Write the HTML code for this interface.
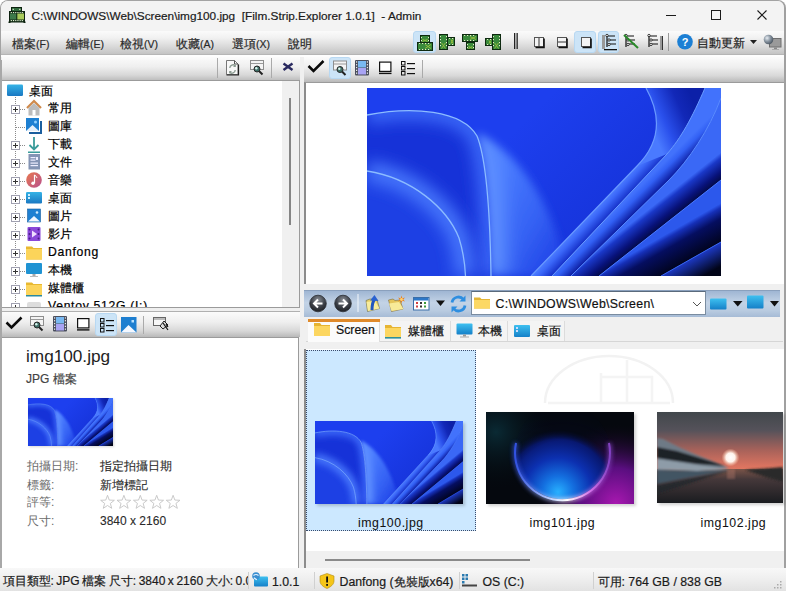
<!DOCTYPE html><html><head><meta charset="utf-8"><style>
*{margin:0;padding:0;box-sizing:border-box}
html,body{width:786px;height:591px;overflow:hidden;background:#fff}
body{font-family:"Liberation Sans",sans-serif;font-size:12px;color:#000;position:relative}
.a{position:absolute}
svg{position:absolute;overflow:visible}
.t{position:absolute;white-space:pre;line-height:1;-webkit-text-stroke:.2px currentColor}
.tb{background:linear-gradient(#fbfbfb,#efefef 40%,#d8d8d8 75%,#b9b9b9)}
.hl{position:absolute;background:#cce4f7;border:1px solid #b8d8f2;border-radius:3px}
.sep{position:absolute;width:1px;background:#a8a8a8;box-shadow:1px 0 0 #fcfcfc}
</style></head><body>
<svg width="0" height="0" style="position:absolute">
<symbol id="bloom" viewBox="0 0 354 188" preserveAspectRatio="none">
<defs>
 <filter id="bl8" x="-50%" y="-50%" width="200%" height="200%"><feGaussianBlur stdDeviation="8"/></filter>
 <filter id="bl3" x="-20%" y="-20%" width="140%" height="140%"><feGaussianBlur stdDeviation="4"/></filter>
 <clipPath id="cpP1"><path d="M0 27 C45 18 95 22 110 48 C119 70 123 120 124 188 H0 Z"/></clipPath>
 <clipPath id="cpP3"><path d="M110 45 C150 62 190 120 200 188 H123 C122 120 118 75 110 45 Z"/></clipPath>
 <linearGradient id="gAB" gradientUnits="userSpaceOnUse" x1="221.8" y1="128" x2="232.3" y2="138"><stop offset="0" stop-color="#4c7cff"/><stop offset="0.35" stop-color="#3a66f8"/><stop offset="1" stop-color="#1530c8"/></linearGradient>
 <linearGradient id="gABt" gradientUnits="userSpaceOnUse" x1="280" y1="30" x2="325" y2="10"><stop offset="0" stop-color="#4a7aff"/><stop offset="0.3" stop-color="#2a50ec"/><stop offset="0.7" stop-color="#1228b8"/><stop offset="1" stop-color="#0c20a8"/></linearGradient>
 <linearGradient id="gBC" gradientUnits="userSpaceOnUse" x1="220.8" y1="150" x2="231.7" y2="161"><stop offset="0" stop-color="#4272fc"/><stop offset="0.35" stop-color="#3260f4"/><stop offset="1" stop-color="#0c1ca0"/></linearGradient>
 <linearGradient id="gCC" gradientUnits="userSpaceOnUse" x1="232.6" y1="160" x2="246" y2="177"><stop offset="0" stop-color="#3a68f6"/><stop offset="0.2" stop-color="#1a38c8"/><stop offset="0.7" stop-color="#08127a"/><stop offset="1" stop-color="#030a48"/></linearGradient>
 <linearGradient id="gDE" gradientUnits="userSpaceOnUse" x1="248.5" y1="175" x2="265" y2="204"><stop offset="0" stop-color="#2c58ec"/><stop offset="0.12" stop-color="#1630b8"/><stop offset="0.4" stop-color="#050e60"/><stop offset="1" stop-color="#010420"/></linearGradient>
 <linearGradient id="gEE" gradientUnits="userSpaceOnUse" x1="330" y1="168" x2="340" y2="186"><stop offset="0" stop-color="#1c38c0"/><stop offset="1" stop-color="#010418"/></linearGradient>
 <linearGradient id="gTop" gradientUnits="userSpaceOnUse" x1="0" y1="0" x2="0" y2="60"><stop offset="0" stop-color="#1c40f2"/><stop offset="1" stop-color="#1838e8"/></linearGradient>
 <linearGradient id="gP3" gradientUnits="userSpaceOnUse" x1="120" y1="100" x2="200" y2="150"><stop offset="0" stop-color="#4a7cff"/><stop offset="0.6" stop-color="#3562f4"/><stop offset="1" stop-color="#2246e8"/></linearGradient>
 <linearGradient id="gMid" gradientUnits="userSpaceOnUse" x1="150" y1="40" x2="260" y2="150"><stop offset="0" stop-color="#1d3fee"/><stop offset="1" stop-color="#1532d8"/></linearGradient>
</defs>
<rect width="354" height="188" fill="url(#gMid)"/>
<g filter="url(#bl3)"><g clip-path="url(#cpP3)">
 <rect width="354" height="188" fill="url(#gP3)"/>
 <path d="M0 27 C45 18 95 22 110 48 C119 70 123 120 124 188" stroke="#5f90ff" stroke-width="30" fill="none" filter="url(#bl8)"/>
</g></g>
<g clip-path="url(#cpP1)">
 <rect width="354" height="188" fill="#1632d8"/>
 <path d="M0 27 C45 18 95 22 110 48 C119 70 123 120 124 188" stroke="#3c6afa" stroke-width="18" fill="none" filter="url(#bl8)"/>
 <path d="M0 83 C45 90 80 120 92 150 C96 163 98 176 98.5 188 H0 Z" fill="#1d40e4"/>
 <path d="M0 83 C45 90 80 120 92 150 C96 163 98 176 98.5 188" stroke="#4676fc" stroke-width="20" fill="none" filter="url(#bl8)"/>
</g>
<path d="M0 27 C45 18 95 22 110 48 C119 70 123 120 124 188" stroke="#8cbcff" stroke-width="1.3" fill="none"/>
<path d="M0 83 C45 90 80 120 92 150 C96 163 98 176 98.5 188" stroke="#8cbcff" stroke-width="1.3" fill="none"/>
<path d="M279 0 C293 25 296 52 270 78 L164 188 L185 188 L300 66 C314 50 325 30 338 0 Z" fill="url(#gAB)"/>
<path d="M279 0 C293 25 296 52 270 78 L300 66 C314 50 325 30 338 0 Z" fill="url(#gABt)"/>
<path d="M338 0 C325 30 314 50 300 66 L185 188 L204 188 L302 92 C322 72 342 42 354 10 V0 Z" fill="url(#gBC)"/>
<path d="M354 10 C342 42 322 72 302 92 L204 188 L232 188 L354 92 Z" fill="url(#gCC)"/>
<path d="M354 92 L232 188 L294 188 L354 154 Z" fill="url(#gDE)"/>
<path d="M354 154 L294 188 L354 188 Z" fill="url(#gEE)"/>
<path d="M279 0 C293 25 296 52 270 78 L164 188" stroke="#6a9aff" stroke-width="1.2" fill="none"/>
<path d="M338 0 C325 30 314 50 300 66 L185 188" stroke="#6a9cff" stroke-width="1" fill="none"/>
<path d="M354 10 C342 42 322 72 302 92 L204 188" stroke="#5a8cff" stroke-width="1" fill="none"/>
<path d="M354 92 L232 188" stroke="#4a7aff" stroke-width="1" fill="none"/>
<path d="M354 154 L294 188" stroke="#3a68f0" stroke-width="1" fill="none"/>
</symbol>
</svg>
<div class="a" style="left:0px;top:0px;width:786px;height:591px;background:#fff"></div>
<div class="a" style="left:0px;top:0px;width:786px;height:591px;background:#f0f0f0;border:1px solid #a3a3a3;border-right:2px solid #a0a0a0;border-bottom:none;border-radius:8px 8px 0 0"></div>
<div class="a" style="left:0px;top:60px;width:2px;height:510px;background:#a8a8a8"></div>
<div class="a" style="left:1px;top:1px;width:783px;height:30px;background:#f3f3f3;border-radius:7px 7px 0 0"></div>
<svg style="left:9px;top:7px" width="16" height="16" viewBox="0 0 16 16">
 <rect x="2" y="0" width="11" height="5" fill="#0d220f"/>
 <rect x="3" y="1" width="9" height="3" fill="#2f6a3c"/>
 <rect x="0" y="4" width="16" height="11.5" fill="#0d220f"/>
 <rect x="1" y="6.3" width="6.3" height="6.4" fill="#3d7a4a"/>
 <rect x="8.3" y="6.3" width="6.7" height="6.4" fill="#a9cb5a"/>
 <rect x="1" y="4.8" width="14" height="1.5" fill="#1c3a20"/><rect x="1" y="12.7" width="14" height="1.8" fill="#1c3a20"/>
 <g fill="#e6f2d4"><rect x="3.6" y="1.8" width="1.2" height="1.2"/><rect x="10.2" y="1.8" width="1.2" height="1.2"/>
 <rect x="1.8" y="5" width="1.1" height="1.1"/><rect x="4" y="5" width="1.1" height="1.1"/><rect x="6.2" y="5" width="1.1" height="1.1"/><rect x="8.4" y="5" width="1.1" height="1.1"/><rect x="10.6" y="5" width="1.1" height="1.1"/><rect x="12.8" y="5" width="1.1" height="1.1"/>
 <rect x="1.8" y="13" width="1.1" height="1.1"/><rect x="4" y="13" width="1.1" height="1.1"/><rect x="6.2" y="13" width="1.1" height="1.1"/><rect x="8.4" y="13" width="1.1" height="1.1"/><rect x="10.6" y="13" width="1.1" height="1.1"/><rect x="12.8" y="13" width="1.1" height="1.1"/></g>
 <rect x="-.5" y="14.5" width="2" height="1.5" fill="#0d220f"/><rect x="14.5" y="14.5" width="2" height="1.5" fill="#0d220f"/></svg>
<div class="t" style="left:31.5px;top:11px;font-size:11.8px;color:#1a1a1a">C:\WINDOWS\Web\Screen\img100.jpg  [Film.Strip.Explorer 1.0.1]  - Admin</div>
<div class="a" style="left:666px;top:15px;width:10px;height:1px;background:#1a1a1a"></div>
<div class="a" style="left:711px;top:10px;width:10px;height:10px;border:1px solid #1a1a1a"></div>
<svg style="left:757px;top:10px" width="10" height="10" viewBox="0 0 10 10"><path d="M0.5 0.5L9.5 9.5M9.5 0.5L0.5 9.5" stroke="#1a1a1a" stroke-width="1.1"/></svg>
<div class="a" style="left:1px;top:31px;width:783px;height:23px;background:linear-gradient(#fbfbfb,#f1f1f1 30%,#dbdbdb 65%,#c3c3c3)"></div>
<div class="a" style="left:1px;top:54px;width:783px;height:1px;background:#b5b5b5"></div>
<div class="a" style="left:1px;top:55px;width:783px;height:2px;background:#fdfdfd"></div>
<div class="t" style="left:12px;top:37.5px;color:#2a2a2a"><span style="font-size:12px">檔案</span><span style="font-size:10.5px">(F)</span></div>
<div class="t" style="left:66px;top:37.5px;color:#2a2a2a"><span style="font-size:12px">編輯</span><span style="font-size:10.5px">(E)</span></div>
<div class="t" style="left:120px;top:37.5px;color:#2a2a2a"><span style="font-size:12px">檢視</span><span style="font-size:10.5px">(V)</span></div>
<div class="t" style="left:176px;top:37.5px;color:#2a2a2a"><span style="font-size:12px">收藏</span><span style="font-size:10.5px">(A)</span></div>
<div class="t" style="left:232px;top:37.5px;color:#2a2a2a"><span style="font-size:12px">選項</span><span style="font-size:10.5px">(X)</span></div>
<div class="t" style="left:288px;top:37.5px;color:#2a2a2a"><span style="font-size:12px">說明</span></div>
<div class="hl" style="left:413px;top:31px;width:23px;height:22px"></div>
<div class="hl" style="left:574px;top:31px;width:22px;height:22px"></div>
<div class="hl" style="left:598px;top:31px;width:21px;height:22px"></div>
<svg style="left:0;top:0" width="786" height="591"><rect x="420.5" y="35.5" width="9" height="7" fill="#2e7434" stroke="#0e2a10" stroke-width="1"/><rect x="422" y="36" width="6" height="6" fill="#3a8a3c"/><path d="M422.5 39.4L427.5 41.5M427.5 39.4L422.5 41.5" stroke="#a8c840" stroke-width="1" opacity=".8"/><rect x="421" y="37" width="1" height="1.2" fill="#e8f0c8"/><rect x="428" y="37" width="1" height="1.2" fill="#e8f0c8"/><rect x="421" y="40" width="1" height="1.2" fill="#e8f0c8"/><rect x="428" y="40" width="1" height="1.2" fill="#e8f0c8"/><rect x="417.5" y="42.5" width="15" height="8" fill="#2e7434" stroke="#0e2a10" stroke-width="1"/><rect x="418" y="44" width="14" height="5" fill="#3a8a3c"/><path d="M425.0 44.5L431 48.5M431 44.5L425.0 48.5" stroke="#a8c840" stroke-width="1" opacity=".8"/><rect x="419" y="43" width="1.2" height="1" fill="#e8f0c8"/><rect x="419" y="49" width="1.2" height="1" fill="#e8f0c8"/><rect x="422" y="43" width="1.2" height="1" fill="#e8f0c8"/><rect x="422" y="49" width="1.2" height="1" fill="#e8f0c8"/><rect x="425" y="43" width="1.2" height="1" fill="#e8f0c8"/><rect x="425" y="49" width="1.2" height="1" fill="#e8f0c8"/><rect x="428" y="43" width="1.2" height="1" fill="#e8f0c8"/><rect x="428" y="49" width="1.2" height="1" fill="#e8f0c8"/><rect x="439.5" y="34.5" width="8" height="15" fill="#2e7434" stroke="#0e2a10" stroke-width="1"/><rect x="441" y="35" width="5" height="14" fill="#3a8a3c"/><path d="M441.5 42.8L445.5 48.5M445.5 42.8L441.5 48.5" stroke="#a8c840" stroke-width="1" opacity=".8"/><rect x="440" y="36" width="1" height="1.2" fill="#e8f0c8"/><rect x="446" y="36" width="1" height="1.2" fill="#e8f0c8"/><rect x="440" y="39" width="1" height="1.2" fill="#e8f0c8"/><rect x="446" y="39" width="1" height="1.2" fill="#e8f0c8"/><rect x="440" y="42" width="1" height="1.2" fill="#e8f0c8"/><rect x="446" y="42" width="1" height="1.2" fill="#e8f0c8"/><rect x="440" y="45" width="1" height="1.2" fill="#e8f0c8"/><rect x="446" y="45" width="1" height="1.2" fill="#e8f0c8"/><rect x="447.5" y="37.5" width="7" height="8" fill="#2e7434" stroke="#0e2a10" stroke-width="1"/><rect x="448" y="39" width="6" height="5" fill="#3a8a3c"/><path d="M451.0 39.5L453 43.5M453 39.5L451.0 43.5" stroke="#a8c840" stroke-width="1" opacity=".8"/><rect x="449" y="38" width="1.2" height="1" fill="#e8f0c8"/><rect x="449" y="44" width="1.2" height="1" fill="#e8f0c8"/><rect x="452" y="38" width="1.2" height="1" fill="#e8f0c8"/><rect x="452" y="44" width="1.2" height="1" fill="#e8f0c8"/><rect x="462.5" y="34.5" width="15" height="7" fill="#2e7434" stroke="#0e2a10" stroke-width="1"/><rect x="463" y="36" width="14" height="4" fill="#3a8a3c"/><path d="M470.0 36.5L476 39.5M476 36.5L470.0 39.5" stroke="#a8c840" stroke-width="1" opacity=".8"/><rect x="464" y="35" width="1.2" height="1" fill="#e8f0c8"/><rect x="464" y="40" width="1.2" height="1" fill="#e8f0c8"/><rect x="467" y="35" width="1.2" height="1" fill="#e8f0c8"/><rect x="467" y="40" width="1.2" height="1" fill="#e8f0c8"/><rect x="470" y="35" width="1.2" height="1" fill="#e8f0c8"/><rect x="470" y="40" width="1.2" height="1" fill="#e8f0c8"/><rect x="473" y="35" width="1.2" height="1" fill="#e8f0c8"/><rect x="473" y="40" width="1.2" height="1" fill="#e8f0c8"/><rect x="466.5" y="42.5" width="8" height="7" fill="#2e7434" stroke="#0e2a10" stroke-width="1"/><rect x="468" y="43" width="5" height="6" fill="#3a8a3c"/><path d="M468.5 46.4L472.5 48.5M472.5 46.4L468.5 48.5" stroke="#a8c840" stroke-width="1" opacity=".8"/><rect x="467" y="44" width="1" height="1.2" fill="#e8f0c8"/><rect x="473" y="44" width="1" height="1.2" fill="#e8f0c8"/><rect x="467" y="47" width="1" height="1.2" fill="#e8f0c8"/><rect x="473" y="47" width="1" height="1.2" fill="#e8f0c8"/><rect x="485.5" y="38.5" width="7" height="7" fill="#2e7434" stroke="#0e2a10" stroke-width="1"/><rect x="486" y="40" width="6" height="4" fill="#3a8a3c"/><path d="M489.0 40.5L491 43.5M491 40.5L489.0 43.5" stroke="#a8c840" stroke-width="1" opacity=".8"/><rect x="487" y="39" width="1.2" height="1" fill="#e8f0c8"/><rect x="487" y="44" width="1.2" height="1" fill="#e8f0c8"/><rect x="490" y="39" width="1.2" height="1" fill="#e8f0c8"/><rect x="490" y="44" width="1.2" height="1" fill="#e8f0c8"/><rect x="492.5" y="34.5" width="8" height="15" fill="#2e7434" stroke="#0e2a10" stroke-width="1"/><rect x="494" y="35" width="5" height="14" fill="#3a8a3c"/><path d="M494.5 42.8L498.5 48.5M498.5 42.8L494.5 48.5" stroke="#a8c840" stroke-width="1" opacity=".8"/><rect x="493" y="36" width="1" height="1.2" fill="#e8f0c8"/><rect x="499" y="36" width="1" height="1.2" fill="#e8f0c8"/><rect x="493" y="39" width="1" height="1.2" fill="#e8f0c8"/><rect x="499" y="39" width="1" height="1.2" fill="#e8f0c8"/><rect x="493" y="42" width="1" height="1.2" fill="#e8f0c8"/><rect x="499" y="42" width="1" height="1.2" fill="#e8f0c8"/><rect x="493" y="45" width="1" height="1.2" fill="#e8f0c8"/><rect x="499" y="45" width="1" height="1.2" fill="#e8f0c8"/><rect x="514" y="33" width="1.3" height="16" fill="#222"/><rect x="516.5" y="33" width="1.3" height="16" fill="#222"/><rect x="534.5" y="37.5" width="9" height="9" fill="#f4f4f4" stroke="#555" stroke-width="1"/><path d="M544 38.5V47.5H535.5" fill="none" stroke="#111" stroke-width="1.6"/><line x1="539" y1="38" x2="539" y2="47" stroke="#333"/><rect x="557.5" y="37.5" width="9" height="9" fill="#f4f4f4" stroke="#555" stroke-width="1"/><path d="M567 38.5V47.5H558.5" fill="none" stroke="#111" stroke-width="1.6"/><line x1="558" y1="42" x2="567" y2="42" stroke="#333"/><rect x="581.5" y="37.5" width="9" height="9" fill="#f4f4f4" stroke="#555" stroke-width="1"/><path d="M591 38.5V47.5H582.5" fill="none" stroke="#111" stroke-width="1.6"/><rect x="602" y="35" width="3" height="14" fill="#999"/><rect x="604" y="49" width="13" height="1.3" fill="#111"/><g stroke="#111" stroke-width="1.2" fill="none"><path d="M607 35V47"/><path d="M607 36H615M610 40H616M610 44H616"/></g><g fill="#fff" stroke="#111" stroke-width=".8"><circle cx="607" cy="35.5" r="1.2"/><circle cx="609" cy="40" r="1.2"/><circle cx="609" cy="44.5" r="1.2"/></g><g stroke="#111" stroke-width="1.2" fill="none"><path d="M626 35V47"/><path d="M626 36H634M629 40H635M629 44H635"/></g><g fill="#fff" stroke="#111" stroke-width=".8"><circle cx="626" cy="35.5" r="1.2"/><circle cx="628" cy="40" r="1.2"/><circle cx="628" cy="44.5" r="1.2"/></g><line x1="624" y1="35" x2="638" y2="48" stroke="#2a8a2a" stroke-width="2"/><rect x="660" y="36" width="3" height="14" fill="#999"/><rect x="662" y="36" width="1" height="14" fill="#333"/><g stroke="#111" stroke-width="1.2" fill="none"><path d="M649 35V47"/><path d="M649 36H657M652 40H658M652 44H658"/></g><g fill="#fff" stroke="#111" stroke-width=".8"><circle cx="649" cy="35.5" r="1.2"/><circle cx="651" cy="40" r="1.2"/><circle cx="651" cy="44.5" r="1.2"/></g><rect x="668" y="33" width="1" height="18" fill="#999"/><circle cx="685" cy="41.8" r="7.8" fill="#1c7fd4"/><text x="685" y="46" font-size="11" font-weight="bold" fill="#fff" text-anchor="middle" font-family="Liberation Sans">?</text><path d="M750 40h7l-3.5 4z" fill="#222"/><defs><radialGradient id="glb" cx=".35" cy=".35" r=".7"><stop offset="0" stop-color="#e8eef4"/><stop offset=".5" stop-color="#8a96a2"/><stop offset="1" stop-color="#4a5560"/></radialGradient></defs><rect x="769" y="38" width="12.5" height="9.5" fill="#6e6e6e"/><rect x="770" y="39" width="10.5" height="7.5" fill="#9a9a9a"/><rect x="774" y="47.5" width="3" height="1.5" fill="#888"/><rect x="772" y="49" width="7" height="1" fill="#aaa"/><circle cx="768.5" cy="39.5" r="4.8" fill="url(#glb)"/></svg>
<div class="t" style="left:697px;top:36.5px;font-size:12px;color:#222">自動更新</div>
<div class="a" style="left:2px;top:57px;width:298px;height:24px;background:linear-gradient(#fbfbfb,#efefef 40%,#d8d8d8 75%,#b9b9b9)"></div>
<div class="a" style="left:2px;top:80px;width:298px;height:228px;background:#fff;border:1px solid #9b9b9b;border-left:none"></div>
<div class="a" style="left:2px;top:308px;width:298px;height:4px;background:#efefef;border-bottom:1px solid #b0b0b0"></div>
<div class="a" style="left:2px;top:312px;width:298px;height:25px;background:linear-gradient(#fbfbfb,#efefef 40%,#d8d8d8 75%,#b9b9b9)"></div>
<div class="a" style="left:2px;top:337px;width:297px;height:231px;background:#fff;border-right:1px solid #9b9b9b;border-top:1px solid #9b9b9b"></div>
<div class="a" style="left:304px;top:57px;width:480px;height:25px;background:linear-gradient(#fbfbfb,#efefef 40%,#d8d8d8 75%,#b9b9b9)"></div>
<div class="a" style="left:304px;top:82px;width:480px;height:202px;background:#fff;border-left:2px solid #8c8c8c;border-top:1px solid #9b9b9b"></div>
<div class="a" style="left:304px;top:284px;width:480px;height:6px;background:#f0f0f0"></div>
<div class="a" style="left:304px;top:290px;width:476px;height:27px;background:linear-gradient(#9fb6d3,#c3d3e6 45%,#b9cbe0 75%,#a6bbd6);border-top:1px solid #8aa0bd"></div>
<div class="a" style="left:304px;top:317px;width:479px;height:32px;background:#f0f0f0"></div>
<div class="a" style="left:304px;top:349px;width:480px;height:202px;background:#fff;border-left:2px solid #8c8c8c"></div>
<div class="a" style="left:304px;top:551px;width:480px;height:17px;background:#f0f0f0;border-left:2px solid #8c8c8c"></div>
<div class="a" style="left:325px;top:559px;width:205px;height:2px;background:#8a8a8a"></div>
<div class="a" style="left:0px;top:568px;width:786px;height:23px;background:linear-gradient(#f8f8f8,#eeeeee 50%,#e2e2e2)"></div>
<svg style="left:0;top:0" width="786" height="591"><rect x="217" y="58" width="1" height="20" fill="#aaa"/><rect x="271" y="58" width="1" height="20" fill="#aaa"/><path d="M226.5 60.5h8l3.5 3.5v10.5h-11.5z" fill="#f8f8f8" stroke="#777" stroke-width="1"/><path d="M234.5 60.5v3.5h3.5" fill="none" stroke="#555"/><path d="M226.5 75h12V64.5" fill="none" stroke="#222" stroke-width="1.2"/><path d="M229.8 68a3.2 3.2 0 0 1 5.5 -2.2M235.2 70a3.2 3.2 0 0 1 -5.5 2.2" fill="none" stroke="#8a9a90" stroke-width="1.3"/><path d="M235.8 64.2v2.8h-2.8zM229.2 73.8v-2.8h2.8z" fill="#8a9a90"/><rect x="250.5" y="60.5" width="13" height="9" fill="#f4f4f4" stroke="#8e8e8e"/><rect x="251" y="63" width="12" height="1" fill="#9a9a9a"/><line x1="258.5" y1="70.5" x2="262.5" y2="74.5" stroke="#222" stroke-width="2"/><circle cx="257" cy="69" r="3" fill="#3e6e66" stroke="#2a2a2a" stroke-width="1"/><circle cx="256.3" cy="68.2" r="1.2" fill="#d8f4ee"/><path d="M283.5 63.5l9 6.5M292.5 63.5l-9 6.5" stroke="#2a2a60" stroke-width="2.4"/></svg>
<div class="a" style="left:3px;top:81px;width:296px;height:226px;overflow:hidden">
<svg style="left:0;top:-1px" width="279" height="227"><defs><linearGradient id="dg44" x1="0" y1="0" x2="0" y2="1"><stop offset="0" stop-color="#35b3e6"/><stop offset="1" stop-color="#1a78c2"/></linearGradient></defs><rect x="4" y="4.5" width="16" height="11.5" rx="1.3" fill="url(#dg44)"/><line x1="12.5" y1="17" x2="12.5" y2="227" stroke="#8a8a8a" stroke-dasharray="1 1"/><line x1="13" y1="29.5" x2="23" y2="29.5" stroke="#8a8a8a" stroke-dasharray="1 1"/><rect x="8.5" y="25.5" width="8" height="8" fill="#fff" stroke="#a0a0b0"/><rect x="10" y="29.0" width="5" height="1" fill="#333"/><rect x="12" y="27.0" width="1" height="5" fill="#333"/><path d="M24 28.0L31 21.0L38 28.0" fill="none" stroke="#cf8a4c" stroke-width="2.2"/><path d="M25.5 28.0L31 23.0L36.5 28.0V35.5H25.5z" fill="#bcbcbc"/><rect x="29.5" y="30.0" width="3" height="5.5" fill="#fff"/><line x1="13" y1="47.5" x2="23" y2="47.5" stroke="#8a8a8a" stroke-dasharray="1 1"/><rect x="26" y="41.0" width="13" height="13" fill="#1b5f9e"/><rect x="23" y="38.0" width="13" height="13" fill="#1e80d2"/><path d="M23 51.0L29.5 45.0L36 51.0z" fill="#e6f0fa"/><circle cx="32.5" cy="42.0" r="1.5" fill="#8fd0ff"/><rect x="36" y="41.0" width="1" height="11" fill="#fff"/><rect x="26" y="51.0" width="11" height="1" fill="#fff"/><line x1="13" y1="65.5" x2="23" y2="65.5" stroke="#8a8a8a" stroke-dasharray="1 1"/><rect x="8.5" y="61.5" width="8" height="8" fill="#fff" stroke="#a0a0b0"/><rect x="10" y="65.0" width="5" height="1" fill="#333"/><rect x="12" y="63.0" width="1" height="5" fill="#333"/><path d="M31 57.0V69.0M26.5 65.0L31 69.5L35.5 65.0" fill="none" stroke="#3a9c9a" stroke-width="1.8"/><rect x="25" y="71.5" width="12" height="1.5" fill="#3a9c9a"/><line x1="13" y1="83.5" x2="23" y2="83.5" stroke="#8a8a8a" stroke-dasharray="1 1"/><rect x="8.5" y="79.5" width="8" height="8" fill="#fff" stroke="#a0a0b0"/><rect x="10" y="83.0" width="5" height="1" fill="#333"/><rect x="12" y="81.0" width="1" height="5" fill="#333"/><rect x="25.5" y="74.0" width="11.5" height="15.5" fill="#8494b4"/><g fill="#eef"><rect x="27.5" y="77.0" width="5" height="1.2"/><rect x="33" y="77.0" width="2" height="3"/><rect x="27.5" y="79.5" width="5" height="1.2"/><rect x="27.5" y="82.5" width="7.5" height="1.2"/><rect x="27.5" y="85.0" width="7.5" height="1.2"/></g><line x1="13" y1="101.5" x2="23" y2="101.5" stroke="#8a8a8a" stroke-dasharray="1 1"/><rect x="8.5" y="97.5" width="8" height="8" fill="#fff" stroke="#a0a0b0"/><rect x="10" y="101.0" width="5" height="1" fill="#333"/><rect x="12" y="99.0" width="1" height="5" fill="#333"/><defs><linearGradient id="mg" x1="0" y1="0" x2="1" y2="1"><stop offset="0" stop-color="#e8784e"/><stop offset="1" stop-color="#b8508e"/></linearGradient></defs><circle cx="31" cy="100.0" r="7.8" fill="url(#mg)"/><path d="M31.5 95.0V103.0" stroke="#fff" stroke-width="1.2"/><circle cx="30" cy="103.2" r="1.7" fill="#fff"/><path d="M31.5 95.0q2 1 2.5 3" stroke="#fff" fill="none"/><line x1="13" y1="119.5" x2="23" y2="119.5" stroke="#8a8a8a" stroke-dasharray="1 1"/><rect x="8.5" y="115.5" width="8" height="8" fill="#fff" stroke="#a0a0b0"/><rect x="10" y="119.0" width="5" height="1" fill="#333"/><rect x="12" y="117.0" width="1" height="5" fill="#333"/><defs><linearGradient id="dg23112" x1="0" y1="0" x2="0" y2="1"><stop offset="0" stop-color="#35b3e6"/><stop offset="1" stop-color="#1a78c2"/></linearGradient></defs><rect x="23" y="112.0" width="16" height="11.5" rx="1.3" fill="url(#dg23112)"/><rect x="25" y="114.0" width="2" height="2" fill="#cdefff"/><rect x="25" y="117.0" width="2" height="2" fill="#cdefff"/><line x1="13" y1="137.5" x2="23" y2="137.5" stroke="#8a8a8a" stroke-dasharray="1 1"/><rect x="8.5" y="133.5" width="8" height="8" fill="#fff" stroke="#a0a0b0"/><rect x="10" y="137.0" width="5" height="1" fill="#333"/><rect x="12" y="135.0" width="1" height="5" fill="#333"/><rect x="24.5" y="129.0" width="13" height="13" fill="#1e80d2" stroke="#155e9e" stroke-width=".6"/><path d="M25 141.5L31 136.0L37 141.5z" fill="#f0f6ff"/><circle cx="34" cy="132.5" r="1.3" fill="#cfeaff"/><line x1="13" y1="155.5" x2="23" y2="155.5" stroke="#8a8a8a" stroke-dasharray="1 1"/><rect x="8.5" y="151.5" width="8" height="8" fill="#fff" stroke="#a0a0b0"/><rect x="10" y="155.0" width="5" height="1" fill="#333"/><rect x="12" y="153.0" width="1" height="5" fill="#333"/><rect x="24.5" y="147.0" width="13" height="14" rx="1" fill="#8a48d8"/><g fill="#4a1e8a"><circle cx="26.5" cy="149.5" r="1"/><circle cx="26.5" cy="154.0" r="1"/><circle cx="26.5" cy="158.5" r="1"/><circle cx="35.5" cy="149.5" r="1"/><circle cx="35.5" cy="154.0" r="1"/><circle cx="35.5" cy="158.5" r="1"/></g><path d="M29 150.5L34 154.0L29 157.5z" fill="#f0e0ff"/><line x1="13" y1="173.5" x2="23" y2="173.5" stroke="#8a8a8a" stroke-dasharray="1 1"/><rect x="8.5" y="169.5" width="8" height="8" fill="#fff" stroke="#a0a0b0"/><rect x="10" y="173.0" width="5" height="1" fill="#333"/><rect x="12" y="171.0" width="1" height="5" fill="#333"/><path d="M23 166.5h6l1.5 1.5h8.5v11.5h-16z" fill="#e8b830"/><rect x="23" y="169.0" width="16" height="10.5" fill="#fcd45a"/><line x1="13" y1="191.5" x2="23" y2="191.5" stroke="#8a8a8a" stroke-dasharray="1 1"/><rect x="8.5" y="187.5" width="8" height="8" fill="#fff" stroke="#a0a0b0"/><rect x="10" y="191.0" width="5" height="1" fill="#333"/><rect x="12" y="189.0" width="1" height="5" fill="#333"/><rect x="23" y="183.0" width="16" height="11" rx="1" fill="#1f93d3"/><rect x="29.5" y="194.0" width="3" height="2" fill="#aaa"/><rect x="27" y="196.0" width="8" height="1" fill="#bbb"/><line x1="13" y1="209.5" x2="23" y2="209.5" stroke="#8a8a8a" stroke-dasharray="1 1"/><rect x="8.5" y="205.5" width="8" height="8" fill="#fff" stroke="#a0a0b0"/><rect x="10" y="209.0" width="5" height="1" fill="#333"/><rect x="12" y="207.0" width="1" height="5" fill="#333"/><path d="M23 202.5h6l1.5 1.5h8.5v11.5h-16z" fill="#e8b830"/><rect x="23" y="205.0" width="16" height="10.5" fill="#fcd45a"/><rect x="23" y="215.0" width="16" height="1.5" fill="#2a8aa0"/><line x1="13" y1="227.5" x2="23" y2="227.5" stroke="#8a8a8a" stroke-dasharray="1 1"/><rect x="8.5" y="223.5" width="8" height="8" fill="#fff" stroke="#a0a0b0"/><rect x="10" y="227.0" width="5" height="1" fill="#333"/><rect x="12" y="225.0" width="1" height="5" fill="#333"/><rect x="24" y="222.0" width="14" height="8" rx="2" fill="#ddd"/></svg>
<div class="t" style="left:26px;top:4px;font-size:12px;color:#000">桌面</div>
<div class="t" style="left:45px;top:21.0px;font-size:12px;color:#000">常用</div>
<div class="t" style="left:45px;top:39.0px;font-size:12px;color:#000">圖庫</div>
<div class="t" style="left:45px;top:57.0px;font-size:12px;color:#000">下載</div>
<div class="t" style="left:45px;top:75.0px;font-size:12px;color:#000">文件</div>
<div class="t" style="left:45px;top:93.0px;font-size:12px;color:#000">音樂</div>
<div class="t" style="left:45px;top:111.0px;font-size:12px;color:#000">桌面</div>
<div class="t" style="left:45px;top:129.0px;font-size:12px;color:#000">圖片</div>
<div class="t" style="left:45px;top:147.0px;font-size:12px;color:#000">影片</div>
<div class="t" style="left:45px;top:165.0px;font-size:12.2px;letter-spacing:.7px;color:#000">Danfong</div>
<div class="t" style="left:45px;top:183.0px;font-size:12px;color:#000">本機</div>
<div class="t" style="left:45px;top:201.0px;font-size:12px;color:#000">媒體櫃</div>
<div class="t" style="left:45px;top:219.0px;font-size:12.2px;letter-spacing:.7px;color:#000">Ventoy 512G (I:)</div>
<div class="a" style="left:279px;top:0px;width:17px;height:226px;background:#f0f0f0"></div>
<div class="a" style="left:286px;top:17px;width:2px;height:127px;background:#858585"></div>
</div>
<div class="hl" style="left:95px;top:313px;width:22px;height:23px"></div>
<svg style="left:0;top:0" width="786" height="591"><path d="M6.5 322.5L11.5 327.5L21.5 317.5" fill="none" stroke="#0a0a0a" stroke-width="2.5"/><rect x="30.5" y="316.5" width="13" height="9" fill="#f4f4f4" stroke="#8e8e8e"/><rect x="31" y="319" width="12" height="1" fill="#9a9a9a"/><line x1="38.5" y1="326.5" x2="42.5" y2="330.5" stroke="#222" stroke-width="2"/><circle cx="37" cy="325" r="3" fill="#3e6e66" stroke="#2a2a2a" stroke-width="1"/><circle cx="36.3" cy="324.2" r="1.2" fill="#d8f4ee"/><rect x="53" y="316" width="14" height="15.5" rx="1" fill="#4a4f5e"/><rect x="56" y="317" width="8" height="6.5" fill="#79b9f2"/><rect x="56" y="324" width="8" height="6.5" fill="#a9a4f4"/><rect x="54" y="317.3" width="1.2" height="1.3" fill="#eee"/><rect x="64.8" y="317.3" width="1.2" height="1.3" fill="#eee"/><rect x="54" y="320.1" width="1.2" height="1.3" fill="#eee"/><rect x="64.8" y="320.1" width="1.2" height="1.3" fill="#eee"/><rect x="54" y="322.90000000000003" width="1.2" height="1.3" fill="#eee"/><rect x="64.8" y="322.90000000000003" width="1.2" height="1.3" fill="#eee"/><rect x="54" y="325.7" width="1.2" height="1.3" fill="#eee"/><rect x="64.8" y="325.7" width="1.2" height="1.3" fill="#eee"/><rect x="54" y="328.5" width="1.2" height="1.3" fill="#eee"/><rect x="64.8" y="328.5" width="1.2" height="1.3" fill="#eee"/><rect x="77.6" y="318.6" width="11.3" height="9.3" fill="#fff" stroke="#111" stroke-width="1.2"/><rect x="77" y="329.2" width="12.5" height="1.4" fill="#111"/><rect x="100.5" y="318.5" width="3.5" height="3.5" fill="none" stroke="#111"/><rect x="106" y="320" width="8" height="1.2" fill="#111"/><rect x="100.5" y="323.5" width="3.5" height="3.5" fill="none" stroke="#111"/><rect x="106" y="325" width="8" height="1.2" fill="#111"/><rect x="100.5" y="328.5" width="3.5" height="3.5" fill="none" stroke="#111"/><rect x="106" y="330" width="8" height="1.2" fill="#111"/><rect x="121" y="317" width="15.5" height="15.5" fill="#1e7fd0"/><path d="M121 332.5L128.5 325L136.5 332.5z" fill="#f4f8ff"/><rect x="131.5" y="320" width="2.5" height="2.5" fill="#b8e2ff"/><rect x="143" y="316" width="1" height="18" fill="#aaa"/><rect x="153.5" y="317.5" width="12" height="8" fill="#f6f6f6" stroke="#666"/><rect x="154" y="318" width="11" height="2" fill="#bbb"/><path d="M160 326L164 321L168 325L163 329z" fill="#ddd" stroke="#222" stroke-width="1"/><path d="M163 323L168 330M166 324l2 3" stroke="#111" stroke-width="1.2"/></svg>
<div class="t" style="left:26px;top:348px;font-size:17.2px;color:#222;-webkit-text-stroke:0">img100.jpg</div>
<div class="t" style="left:26px;top:373px;font-size:12px;color:#444">JPG 檔案</div>
<div class="a" style="left:29px;top:399px;width:85px;height:48px;background:rgba(0,0,0,.15);filter:blur(1.2px)"></div>
<svg style="left:27.5px;top:397.5px" width="85" height="48" viewBox="0 0 354 188" preserveAspectRatio="none"><use href="#bloom"/></svg>
<div class="t" style="left:27px;top:459.5px;font-size:12px;color:#6a6a6a;-webkit-text-stroke:0">拍攝日期:</div>
<div class="t" style="left:100px;top:459.5px;font-size:12px;color:#2a2a2a;-webkit-text-stroke:.1px #2a2a2a">指定拍攝日期</div>
<div class="t" style="left:27px;top:478.5px;font-size:12px;color:#6a6a6a;-webkit-text-stroke:0">標籤:</div>
<div class="t" style="left:100px;top:478.5px;font-size:12px;color:#2a2a2a;-webkit-text-stroke:.1px #2a2a2a">新增標記</div>
<div class="t" style="left:27px;top:496.0px;font-size:12px;color:#6a6a6a;-webkit-text-stroke:0">評等:</div>
<div class="t" style="left:27px;top:515.0px;font-size:12px;color:#6a6a6a;-webkit-text-stroke:0">尺寸:</div>
<div class="t" style="left:100px;top:515.0px;font-size:12px;color:#2a2a2a;-webkit-text-stroke:.1px #2a2a2a">3840 x 2160</div>
<svg style="left:0;top:0" width="786" height="591"><polygon points="107.50,495.30 109.26,500.07 114.35,500.28 110.35,503.43 111.73,508.32 107.50,505.50 103.27,508.32 104.65,503.43 100.65,500.28 105.74,500.07" fill="#fff" stroke="#c4c4c4" stroke-width=".9"/><polygon points="123.90,495.30 125.66,500.07 130.75,500.28 126.75,503.43 128.13,508.32 123.90,505.50 119.67,508.32 121.05,503.43 117.05,500.28 122.14,500.07" fill="#fff" stroke="#c4c4c4" stroke-width=".9"/><polygon points="140.30,495.30 142.06,500.07 147.15,500.28 143.15,503.43 144.53,508.32 140.30,505.50 136.07,508.32 137.45,503.43 133.45,500.28 138.54,500.07" fill="#fff" stroke="#c4c4c4" stroke-width=".9"/><polygon points="156.70,495.30 158.46,500.07 163.55,500.28 159.55,503.43 160.93,508.32 156.70,505.50 152.47,508.32 153.85,503.43 149.85,500.28 154.94,500.07" fill="#fff" stroke="#c4c4c4" stroke-width=".9"/><polygon points="173.10,495.30 174.86,500.07 179.95,500.28 175.95,503.43 177.33,508.32 173.10,505.50 168.87,508.32 170.25,503.43 166.25,500.28 171.34,500.07" fill="#fff" stroke="#c4c4c4" stroke-width=".9"/></svg>
<div class="hl" style="left:329px;top:57px;width:22px;height:22px"></div>
<svg style="left:0;top:0" width="786" height="591"><path d="M308.5 66.0L313.5 71.0L323.5 61.0" fill="none" stroke="#0a0a0a" stroke-width="2.5"/><rect x="333.5" y="61.0" width="13" height="9" fill="#f4f4f4" stroke="#8e8e8e"/><rect x="334" y="63.5" width="12" height="1" fill="#9a9a9a"/><line x1="341.5" y1="71.0" x2="345.5" y2="75.0" stroke="#222" stroke-width="2"/><circle cx="340" cy="69.5" r="3" fill="#3e6e66" stroke="#2a2a2a" stroke-width="1"/><circle cx="339.3" cy="68.7" r="1.2" fill="#d8f4ee"/><rect x="355" y="60" width="14" height="15.5" rx="1" fill="#4a4f5e"/><rect x="358" y="61" width="8" height="6.5" fill="#79b9f2"/><rect x="358" y="68" width="8" height="6.5" fill="#a9a4f4"/><rect x="356" y="61.3" width="1.2" height="1.3" fill="#eee"/><rect x="366.8" y="61.3" width="1.2" height="1.3" fill="#eee"/><rect x="356" y="64.1" width="1.2" height="1.3" fill="#eee"/><rect x="366.8" y="64.1" width="1.2" height="1.3" fill="#eee"/><rect x="356" y="66.89999999999999" width="1.2" height="1.3" fill="#eee"/><rect x="366.8" y="66.89999999999999" width="1.2" height="1.3" fill="#eee"/><rect x="356" y="69.69999999999999" width="1.2" height="1.3" fill="#eee"/><rect x="366.8" y="69.69999999999999" width="1.2" height="1.3" fill="#eee"/><rect x="356" y="72.5" width="1.2" height="1.3" fill="#eee"/><rect x="366.8" y="72.5" width="1.2" height="1.3" fill="#eee"/><rect x="379.6" y="62.1" width="11.3" height="9.3" fill="#fff" stroke="#111" stroke-width="1.2"/><rect x="379" y="72.7" width="12.5" height="1.4" fill="#111"/><rect x="401.5" y="61.5" width="3.5" height="3.5" fill="none" stroke="#111"/><rect x="407" y="63" width="8" height="1.2" fill="#111"/><rect x="401.5" y="66.5" width="3.5" height="3.5" fill="none" stroke="#111"/><rect x="407" y="68" width="8" height="1.2" fill="#111"/><rect x="401.5" y="71.5" width="3.5" height="3.5" fill="none" stroke="#111"/><rect x="407" y="73" width="8" height="1.2" fill="#111"/><rect x="422" y="60" width="1" height="18" fill="#aaa"/></svg>
<svg style="left:367px;top:88px" width="354" height="188" viewBox="0 0 354 188" preserveAspectRatio="none"><use href="#bloom"/></svg>
<svg style="left:0;top:0" width="786" height="591"><defs><radialGradient id="nb318" cx=".5" cy=".3" r=".7"><stop offset="0" stop-color="#8a8f96"/><stop offset=".6" stop-color="#3c4048"/><stop offset="1" stop-color="#1e2024"/></radialGradient></defs><circle cx="318" cy="303.5" r="8.3" fill="url(#nb318)" stroke="#2a2d33" stroke-width=".8"/><path d="M322.5 303.5H314.5M318 299.5L314 303.5L318 307.5" fill="none" stroke="#fff" stroke-width="2"/><defs><radialGradient id="nb343" cx=".5" cy=".3" r=".7"><stop offset="0" stop-color="#8a8f96"/><stop offset=".6" stop-color="#3c4048"/><stop offset="1" stop-color="#1e2024"/></radialGradient></defs><circle cx="343" cy="303.5" r="8.3" fill="url(#nb343)" stroke="#2a2d33" stroke-width=".8"/><path d="M338.5 303.5H346.5M343 299.5L347 303.5L343 307.5" fill="none" stroke="#fff" stroke-width="2"/><rect x="357.5" y="294" width="1" height="18" fill="#f4f8fc"/><path d="M366 300.5L370 299L377 299.5L379.5 308.5L367.5 311.5Z" fill="#e6cf68" stroke="#6a6a4a" stroke-width=".6"/><path d="M366.5 302L375 301L379.5 308.5L368 311Z" fill="#f8ec9c"/><path d="M372 310C372 305 373 301 375 298.5" fill="none" stroke="#2256c0" stroke-width="3"/><path d="M370 300.5L374.5 295L378.5 301Z" fill="#2a62d0"/><path d="M388.5 300L393 299L395 300.5L400 300L403 309L391.5 311.5Z" fill="#e4c45a" stroke="#7a6a40" stroke-width=".6"/><path d="M389 303.5L399 302L403.5 309L391.5 311Z" fill="#f8ea98"/><path d="M401.5 295.5L402.3 298.2L405 297.5L403.2 299.5L405 301.5L402.3 300.8L401.5 303.5L400.7 300.8L398 301.5L399.8 299.5L398 297.5L400.7 298.2Z" fill="#e8821e"/><circle cx="401.5" cy="299.5" r="1.4" fill="#ffd070"/><rect x="413.5" y="297.5" width="15.5" height="12.5" fill="#fff" stroke="#3a6ea8"/><rect x="414" y="298" width="14.5" height="2.5" fill="#2e78c8"/><rect x="416" y="302.0" width="2" height="2" fill="#d04040"/><rect x="416" y="305.5" width="2" height="2" fill="#d04040"/><rect x="420" y="302.0" width="2" height="2" fill="#333"/><rect x="420" y="305.5" width="2" height="2" fill="#333"/><rect x="424" y="302.0" width="2" height="2" fill="#3a9a3a"/><rect x="424" y="305.5" width="2" height="2" fill="#3a9a3a"/><path d="M436 300.5h9l-4.5 5.5z" fill="#111"/><path d="M452 302.5a6.5 6.5 0 0 1 11.5 -3" fill="none" stroke="#2e8ee0" stroke-width="2.8"/><path d="M465.5 295.5v6h-6z" fill="#2e8ee0"/><path d="M465 305.5a6.5 6.5 0 0 1 -11.5 3" fill="none" stroke="#2e8ee0" stroke-width="2.8"/><path d="M451.5 312.5v-6h6z" fill="#2e8ee0"/></svg>
<div class="a" style="left:471px;top:291px;width:235px;height:24px;background:#fff;border:1px solid #7a8ca0;border-top-color:#5a6a7c"></div>
<svg style="left:0;top:0" width="786" height="591"><path d="M474 297.5h6l1.5 1.5h8.5v9.5h-16z" fill="#e4b535"/><rect x="474" y="300" width="16" height="8.5" fill="#fcd865"/><path d="M693 302l4 4 4-4" fill="none" stroke="#555" stroke-width="1"/><defs><linearGradient id="tl" x1="0" y1="0" x2="0" y2="1"><stop offset="0" stop-color="#3ec0f0"/><stop offset="1" stop-color="#1580c8"/></linearGradient></defs><rect x="710" y="298.5" width="16.5" height="11" rx="1" fill="url(#tl)"/><path d="M733 301h9.5l-4.75 5.5z" fill="#111"/><rect x="747" y="295.5" width="16.5" height="13" rx="1" fill="url(#tl)"/><path d="M770 301h9l-4.5 5.5z" fill="#111"/></svg>
<div class="t" style="left:495.5px;top:297.5px;font-size:12.3px;letter-spacing:.3px;color:#111">C:\WINDOWS\Web\Screen\</div>
<div class="a" style="left:306px;top:341px;width:477px;height:1px;background:#d6d6d6"></div>
<div class="a" style="left:308px;top:319px;width:72px;height:23px;background:#fbfbfb;border-right:1px solid #ddd"></div>
<div class="a" style="left:308px;top:319px;width:72px;height:3px;background:#e08a2a"></div>
<div class="a" style="left:450px;top:321px;width:1px;height:20px;background:#dcdcdc"></div>
<div class="a" style="left:507px;top:321px;width:1px;height:20px;background:#dcdcdc"></div>
<div class="a" style="left:564px;top:321px;width:1px;height:20px;background:#dcdcdc"></div>
<div class="a" style="left:380px;top:321px;width:70px;height:20px;background:#f4f4f4"></div>
<div class="a" style="left:451px;top:321px;width:56px;height:20px;background:#f4f4f4"></div>
<div class="a" style="left:508px;top:321px;width:56px;height:20px;background:#f4f4f4"></div>
<svg style="left:0;top:0" width="786" height="591"><path d="M314 323h6l1.5 2h8.5v11h-16z" fill="#e6b432"/><rect x="314" y="326" width="16" height="10" fill="#fcd660"/><path d="M385 325h6l1.5 2h8.5v11h-16z" fill="#e6b432"/><rect x="385" y="328" width="16" height="10" fill="#fcd660"/><rect x="385" y="337" width="16" height="1.6" fill="#2f8f9a"/><rect x="456.5" y="323.5" width="16" height="11" rx="1" fill="url(#tl)"/><rect x="463" y="334.5" width="3" height="2" fill="#999"/><rect x="460" y="336.5" width="9" height="1" fill="#aaa"/><rect x="514" y="325" width="16" height="12" rx="1" fill="url(#tl)"/><rect x="516" y="327" width="2" height="2" fill="#cdf"/><rect x="516" y="330" width="2" height="2" fill="#cdf"/></svg>
<div class="t" style="left:336px;top:324px;font-size:12.3px;color:#111">Screen</div>
<div class="t" style="left:408px;top:324.5px;font-size:12px;color:#111">媒體櫃</div>
<div class="t" style="left:478px;top:324.5px;font-size:12px;color:#111">本機</div>
<div class="t" style="left:537px;top:324.5px;font-size:12px;color:#111">桌面</div>
<svg style="left:0;top:0" width="786" height="591"><path d="M545 403A64 47 0 0 1 673 403" fill="none" stroke="#f2f2f2" stroke-width="2.5"/><path d="M548 403H670M601 373V403M627 360V403M601 377H652V403" stroke="#f4f4f4" stroke-width="2.5" fill="none"/></svg>
<div class="a" style="left:306px;top:350px;width:170px;height:181px;background:#cce8ff;border:1px dotted #3a4a6a"></div>
<div class="a" style="left:317px;top:423px;width:148px;height:83px;background:rgba(0,0,0,.18);filter:blur(1.5px)"></div>
<svg style="left:315px;top:421px" width="148" height="83" viewBox="0 0 354 188" preserveAspectRatio="none"><use href="#bloom"/></svg>
<div class="t" style="left:358px;top:516.5px;font-size:12.3px;letter-spacing:.55px;color:#111;-webkit-text-stroke:.05px #111">img100.jpg</div>
<div class="t" style="left:529.5px;top:516.5px;font-size:12.3px;letter-spacing:.55px;color:#111;-webkit-text-stroke:.05px #111">img101.jpg</div>
<div class="t" style="left:700.5px;top:516.5px;font-size:12.3px;letter-spacing:.55px;color:#111;-webkit-text-stroke:.05px #111">img102.jpg</div>
<div class="a" style="left:488px;top:414px;width:148px;height:92px;background:rgba(0,0,0,.18);filter:blur(1.5px)"></div>
<svg style="left:486px;top:412px;overflow:hidden" width="148" height="92" viewBox="0 0 148 92">
<defs>
<radialGradient id="g101c" cx="72" cy="80" r="62" gradientUnits="userSpaceOnUse"><stop offset="0" stop-color="#28b0ff"/><stop offset=".25" stop-color="#1470e0"/><stop offset=".55" stop-color="#0c30b0"/><stop offset=".85" stop-color="#081870"/><stop offset="1" stop-color="#050a30" stop-opacity=".3"/></radialGradient>
<radialGradient id="g101m" cx="130" cy="92" r="80" gradientUnits="userSpaceOnUse"><stop offset="0" stop-color="#a818b0"/><stop offset=".45" stop-color="#5a0e80"/><stop offset="1" stop-color="#100818" stop-opacity="0"/></radialGradient>
<radialGradient id="g101t" cx="10" cy="20" r="60" gradientUnits="userSpaceOnUse"><stop offset="0" stop-color="#0a2a34"/><stop offset="1" stop-color="#04080e" stop-opacity="0"/></radialGradient>
<linearGradient id="g101r" x1="29" y1="0" x2="124" y2="0" gradientUnits="userSpaceOnUse"><stop offset="0" stop-color="#3050e0"/><stop offset=".35" stop-color="#b0c8ff"/><stop offset=".55" stop-color="#ffffff"/><stop offset=".8" stop-color="#d070e8"/><stop offset="1" stop-color="#8040c0"/></linearGradient>
</defs>
<rect width="148" height="92" fill="#05080e"/>
<rect width="148" height="92" fill="url(#g101t)"/>
<rect width="148" height="92" fill="url(#g101m)"/>
<filter id="f101" x="-20%" y="-20%" width="140%" height="140%"><feGaussianBlur stdDeviation="2"/></filter>
<radialGradient id="g101fade" cx="76.5" cy="80" r="85" gradientUnits="userSpaceOnUse"><stop offset=".6" stop-color="#fff"/><stop offset="1" stop-color="#fff" stop-opacity="0"/></radialGradient>
<mask id="m101"><circle cx="76.5" cy="39.5" r="47.5" fill="url(#g101fade)"/></mask>
<rect width="148" height="92" fill="url(#g101c)" mask="url(#m101)"/>
<path d="M30 31 A47.5 47.5 0 1 0 123 31" fill="none" stroke="url(#g101r)" stroke-width="4" filter="url(#f101)" opacity=".8"/>
<path d="M30 31 A47.5 47.5 0 1 0 123 31" fill="none" stroke="url(#g101r)" stroke-width="2"/>
</svg>
<div class="a" style="left:659px;top:414px;width:126px;height:91px;background:rgba(0,0,0,.18);filter:blur(1.5px)"></div>
<svg style="left:657px;top:412px;overflow:hidden" width="126" height="91" viewBox="0 0 126 91">
<defs><linearGradient id="sky" x1="0" y1="0" x2="0" y2="1"><stop offset="0" stop-color="#41474b"/><stop offset=".2" stop-color="#55525a"/><stop offset=".42" stop-color="#a8625a"/><stop offset=".6" stop-color="#dc7460"/><stop offset=".66" stop-color="#e47c62"/></linearGradient>
<linearGradient id="wat" x1="0" y1="0" x2="0" y2="1"><stop offset="0" stop-color="#7a5448"/><stop offset=".3" stop-color="#45383a"/><stop offset="1" stop-color="#1a1c20"/></linearGradient>
<radialGradient id="sun" cx=".5" cy=".5" r=".5"><stop offset="0" stop-color="#fff"/><stop offset=".5" stop-color="#fff4ec"/><stop offset="1" stop-color="#ffc0a0" stop-opacity="0"/></radialGradient>
<filter id="f102"><feGaussianBlur stdDeviation=".8"/></filter></defs>
<rect width="126" height="91" fill="url(#sky)"/>
<rect y="57" width="126" height="34" fill="url(#wat)"/>
<g filter="url(#f102)">
<path d="M0 26 L6 27 L14 31 L24 36 L40 43 L58 50 L72 56 L0 58 Z" fill="#6e7a86"/>
<path d="M0 35 L20 39 L40 45 L56 50 L68 54 L40 52 L0 46 Z" fill="#1c2226"/>
<path d="M0 47 L40 53 L72 57 L40 59 L0 57 Z" fill="#8e9ca8"/>
<path d="M0 58 L40 59 L74 58 L30 66 L0 72 Z" fill="#425464"/>
<path d="M0 74 L74 58 L0 82 Z" fill="#22282c" opacity=".8"/>
<path d="M88 58 L126 55 V70 L112 66 Z" fill="#2c2a2a"/>
</g>
<circle cx="73.5" cy="45.5" r="9" fill="url(#sun)"/>
<rect x="70" y="57" width="8" height="10" fill="#c08070" opacity=".35" filter="url(#f102)"/>
</svg>
<div class="a" style="left:0;top:568px;width:248px;height:23px;overflow:hidden"><div class="t" style="left:2.5px;top:7px;font-size:12px;word-spacing:-.8px;color:#1a1a1a">項目類型: JPG 檔案 尺寸: 3840 x 2160 大小: 0.0 MB</div></div>
<div class="a" style="left:248px;top:572px;width:1px;height:17px;background:#d0d0d0"></div>
<div class="a" style="left:314px;top:572px;width:1px;height:17px;background:#d0d0d0"></div>
<div class="a" style="left:459px;top:572px;width:1px;height:17px;background:#d0d0d0"></div>
<div class="a" style="left:593px;top:572px;width:1px;height:17px;background:#d0d0d0"></div>
<div class="t" style="left:272px;top:576px;font-size:12.3px;color:#1a1a1a">1.0.1</div>
<div class="t" style="left:339.5px;top:576px;font-size:12.3px;color:#1a1a1a">Danfong (免裝版x64)</div>
<div class="t" style="left:482.5px;top:576px;font-size:12.3px;color:#1a1a1a">OS (C:)</div>
<div class="t" style="left:597.5px;top:576px;font-size:12.3px;color:#1a1a1a">可用: 764 GB / 838 GB</div>
<svg style="left:0;top:0" width="786" height="591"><rect x="254" y="576.5" width="14" height="10" rx="1" fill="url(#tl)"/><circle cx="256" cy="576" r="3.8" fill="#3a8ed0"/><path d="M253.5 575.5q2.5-2 5 0M253.8 577.8l3 2" stroke="#e8f4ff" stroke-width="1.2" fill="none"/><path d="M327 573.5l7 2.5v5c0 3.5-3.5 6-7 7.5c-3.5-1.5-7-4-7-7.5v-5z" fill="#f5c518" stroke="#b08a10" stroke-width=".6"/><rect x="326.2" y="576.5" width="1.8" height="6" fill="#111"/><rect x="326.2" y="584" width="1.8" height="1.8" fill="#111"/><g fill="#2a7ab0"><rect x="462" y="574" width="2.5" height="2.5"/><rect x="465.5" y="574" width="2.5" height="2.5"/><rect x="462" y="577.5" width="2.5" height="2.5"/><rect x="465.5" y="577.5" width="2.5" height="2.5"/><rect x="462" y="581" width="2.5" height="2.5"/></g><rect x="462" y="584.5" width="15" height="2" fill="#444"/><g fill="#aaa"><rect x="780" y="581" width="1.5" height="1.5"/><rect x="777" y="584" width="1.5" height="1.5"/><rect x="780" y="584" width="1.5" height="1.5"/><rect x="774" y="587" width="1.5" height="1.5"/><rect x="777" y="587" width="1.5" height="1.5"/><rect x="780" y="587" width="1.5" height="1.5"/></g></svg>
</body></html>
